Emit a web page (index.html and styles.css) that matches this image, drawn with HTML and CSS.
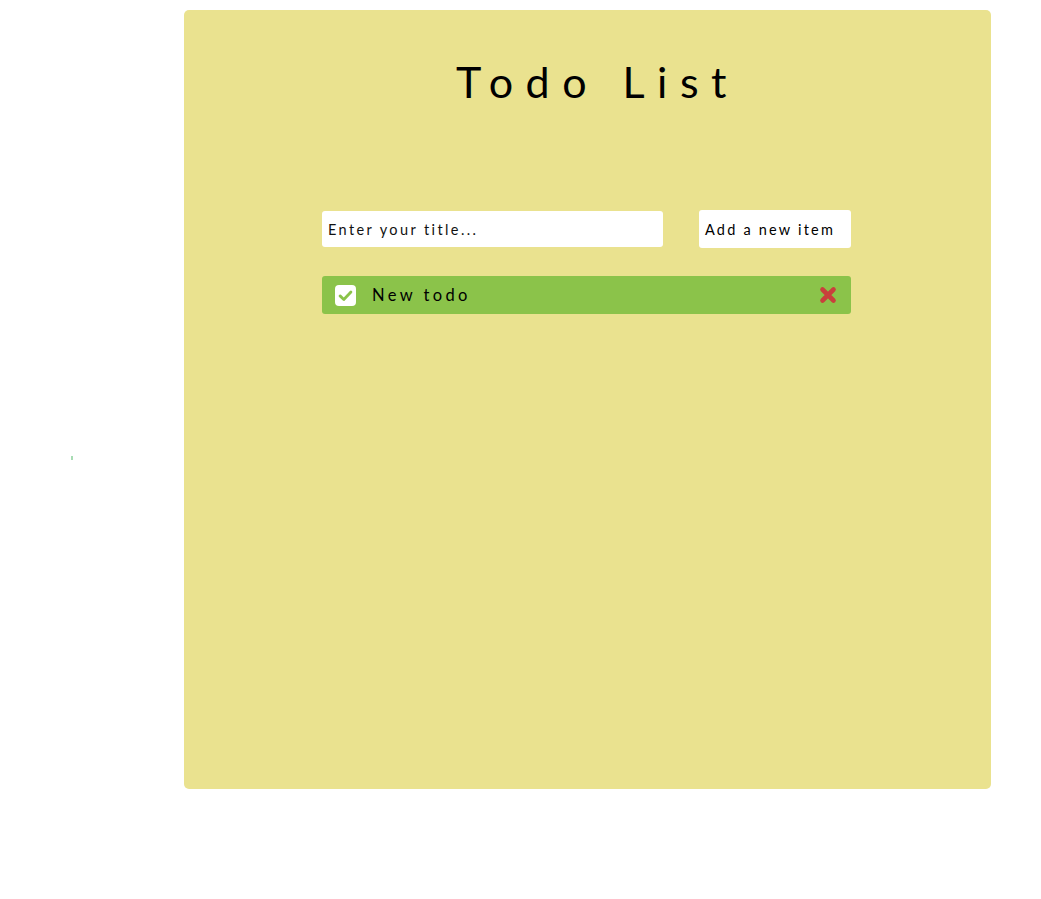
FILE: index.html
```html
<!DOCTYPE html>
<html lang="en">
<head>
<meta charset="utf-8">
<title>Todo List</title>
<link rel="stylesheet" href="styles.css">
</head>
<body>
<span class="speck"></span>
<main class="card">
  <h1 class="title">Todo List</h1>
  <form class="add-form">
    <input class="title-input" type="text" placeholder="Enter your title...">
    <button class="add-btn" type="button">Add a new item</button>
  </form>
  <ul class="todos">
    <li class="todo">
      <span class="check">
        <svg viewBox="0 0 16 16" width="15" height="15" aria-hidden="true"><path d="M2.2 8.4 L6.2 12.2 L13.8 4.2" fill="none" stroke="#8bc34a" stroke-width="3" stroke-linecap="round" stroke-linejoin="round"/></svg>
      </span>
      <span class="label">New todo</span>
      <button class="remove" type="button" aria-label="Remove">
        <svg viewBox="0 0 18 18" width="18" height="18" aria-hidden="true"><path d="M3.5 3.5 L14.5 14.5 M14.5 3.5 L3.5 14.5" stroke="#c9403c" stroke-width="4.6" stroke-linecap="round"/></svg>
      </button>
    </li>
  </ul>
</main>
</body>
</html>
```
FILE: styles.css
```css
* { box-sizing: border-box; }
html, body { margin: 0; padding: 0; background: #ffffff; }
body {
  position: relative;
  min-height: 899px;
  font-family: "Lato", "Open Sans", sans-serif;
  color: #000;
}
.speck {
  position: absolute;
  left: 71px;
  top: 456px;
  width: 2px;
  height: 4px;
  background: #a8dcb4;
}
.card {
  margin: 10px 0 0 184px;
  width: 807px;
  height: 779px;
  background: #eae28f;
  border-radius: 5px;
  padding: 45px 2px 0 0;
  display: flex;
  flex-direction: column;
  align-items: center;
}
.title {
  margin: 0;
  font-size: 43px;
  font-weight: 400;
  line-height: 54px;
  letter-spacing: 12.5px;
  text-indent: 22px;
}
.add-form {
  margin-top: 101px;
  display: flex;
  align-items: center;
  gap: 36px;
  width: 529px;
}
.title-input {
  width: 341px;
  height: 36px;
  border: none;
  border-radius: 3px;
  background: #fff;
  padding: 0 6px;
  font-family: inherit;
  font-size: 14.5px;
  letter-spacing: 2.4px;
  color: #000;
  outline: none;
}
.title-input::placeholder { color: #111; opacity: 1; }
.add-btn {
  width: 152px;
  height: 38px;
  border: none;
  border-radius: 3px;
  background: #fff;
  padding: 0 6px;
  text-align: left;
  font-family: inherit;
  font-size: 14.5px;
  letter-spacing: 2.2px;
  color: #000;
  white-space: nowrap;
}
.todos {
  list-style: none;
  margin: 28px 0 0;
  padding: 0;
  width: 529px;
}
.todo {
  display: flex;
  align-items: center;
  height: 38px;
  background: #8bc34a;
  border-radius: 3px;
  padding: 0 14px 0 13px;
}
.check {
  width: 21px;
  height: 21px;
  background: #fff;
  border-radius: 4px;
  display: flex;
  align-items: center;
  justify-content: center;
}
.label {
  margin-left: 16px;
  flex: 1;
  font-size: 16.5px;
  letter-spacing: 3.4px;
}
.remove {
  border: none;
  background: none;
  padding: 0;
  width: 18px;
  height: 18px;
  display: flex;
}
```
